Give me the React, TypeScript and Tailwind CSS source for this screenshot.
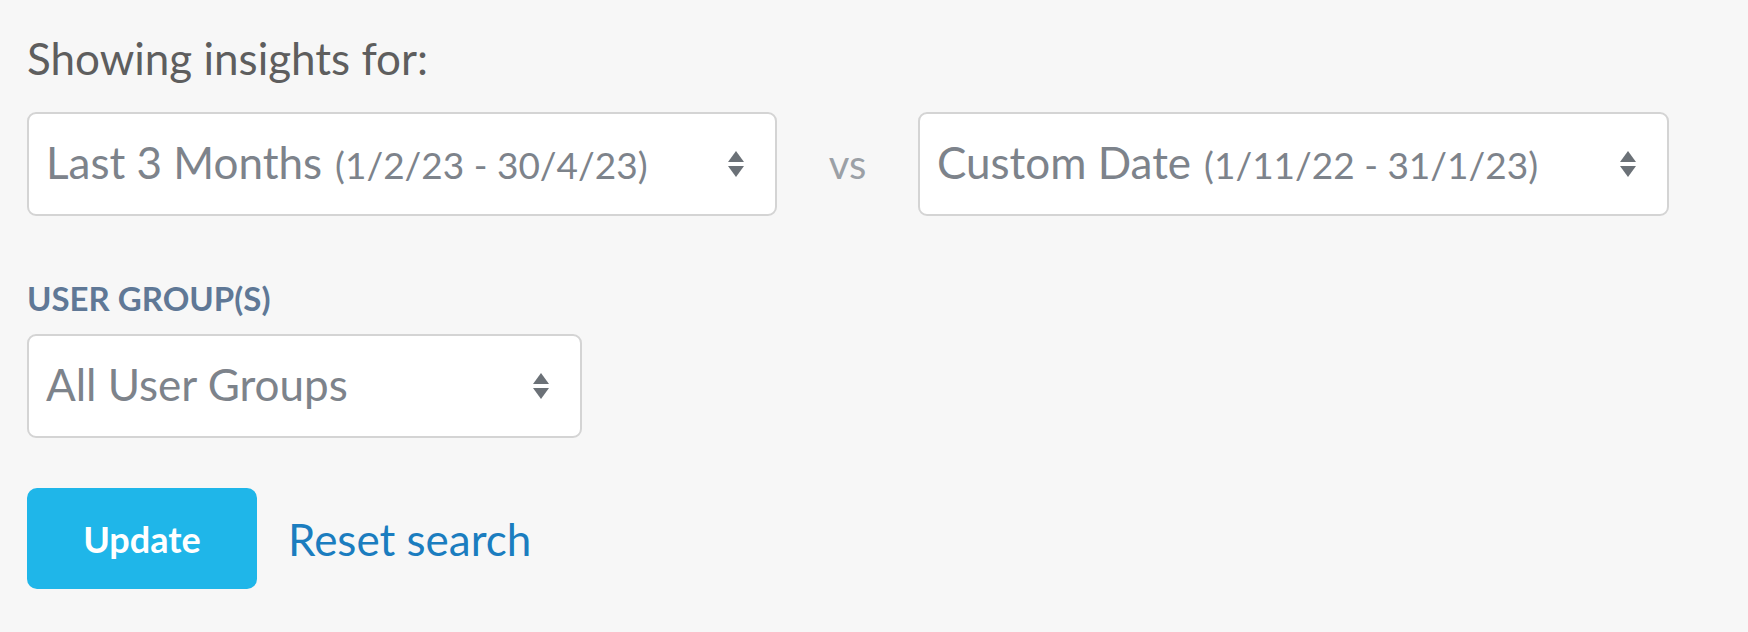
import React from "react";

const Arrows = () => (
  <svg width="18" height="26" viewBox="0 0 18 26" className="shrink-0">
    <path d="M9 0 L17 11 L1 11 Z" fill="#6b7177" />
    <path d="M1 15 L17 15 L9 26 Z" fill="#6b7177" />
  </svg>
);

const Select = ({ main, range, w }: { main: string; range?: string; w: string }) => (
  <div
    className={`${w} h-[104px] bg-white border-2 border-[#d4d4d4] rounded-[9px] flex items-center pl-[17px] pr-[30px]`}
  >
    <div className="flex-1 flex items-baseline text-[#7d838b] -mt-[4px]">
      <span className="text-[44px]">{main}</span>
      {range && <span className="text-[37px] ml-[13px]">{range}</span>}
    </div>
    <Arrows />
  </div>
);

export default function App() {
  return (
    <div
      className="w-[1748px] h-[632px] bg-[#f7f7f7] pl-[27px] pt-[30px]"
      style={{ fontFamily: "Lato, 'Open Sans', sans-serif" }}
    >
      <div className="text-[44px] leading-[56px] text-[#5e5e5e]">Showing insights for:</div>
      <div className="flex items-center mt-[26px]">
        <Select w="w-[750px]" main="Last 3 Months" range="(1/2/23 - 30/4/23)" />
        <div className="w-[141px] text-center text-[40px] text-[#9ba0a6]">vs</div>
        <Select w="w-[751px]" main="Custom Date" range="(1/11/22 - 31/1/23)" />
      </div>
      <div className="mt-[62px] text-[33px] leading-[40px] font-bold text-[#5f7896]">USER GROUP(S)</div>
      <div className="mt-[16px]">
        <Select w="w-[555px]" main="All User Groups" />
      </div>
      <div className="flex items-center mt-[50px]">
        <button className="w-[230px] h-[101px] rounded-[10px] bg-[#1fb6e9] text-white font-bold text-[36px]">
          Update
        </button>
        <a className="ml-[31px] text-[44px] text-[#1b7dbf]">Reset search</a>
      </div>
    </div>
  );
}
